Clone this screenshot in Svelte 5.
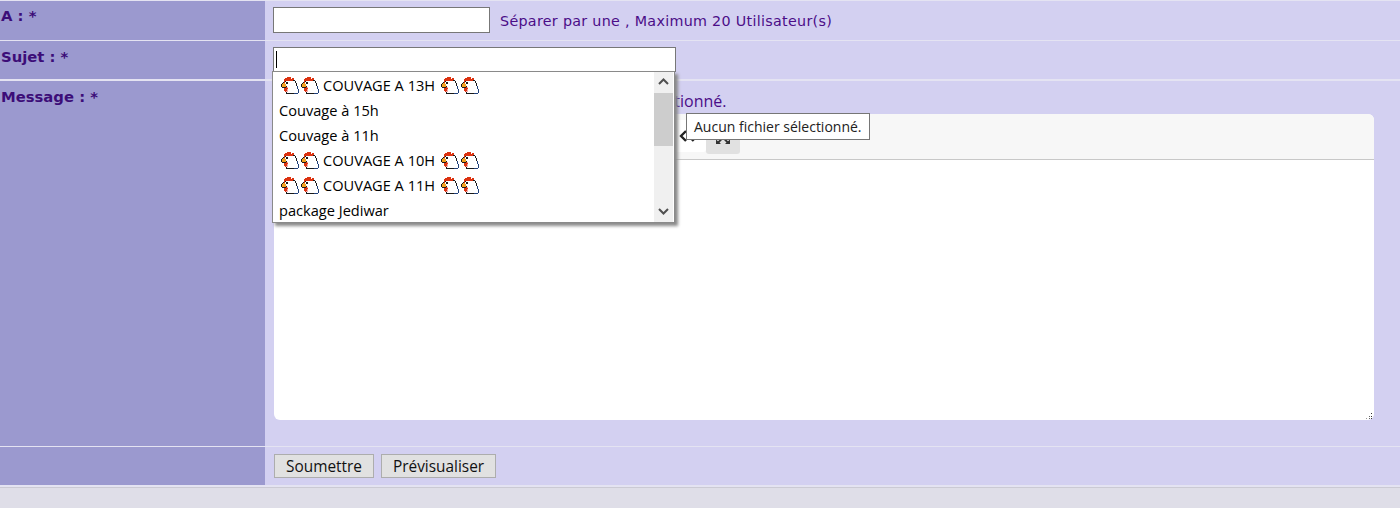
<script>
  const chicken = [
    "......RRR........",
    "....RRRRR.RR.....",
    "...RRRRRRRRR.....",
    "...RRRRRRRRKK....",
    "...RKWWWWWWWWK...",
    "..KRWKKWWWWWWK...",
    ".KOOWKKWWWWWWWK..",
    "KOOOOWWWWWWWWWK..",
    "KOOOOKWWWWWWWWWB.",
    ".KKKKRPWWWWWWWWB.",
    "...RRRRWWWWWWWWB.",
    "...RRRPWWWWWWWWWB",
    "...RRRPWWWWWWWWWB",
    "....RPPWWWWWWWWWB",
    ".....KWWWWWWWWWWB",
    ".....KKKKKKKBBBB."
  ];
  const colors = { K: "#1a1a1a", R: "#dc3210", O: "#f0a020", W: "#ffffff", P: "#f7a8a8", B: "#20407a" };
  const pixels = [];
  chicken.forEach((row, y) => {
    [...row].forEach((c, x) => {
      if (c !== ".") pixels.push({ x, y, fill: colors[c] });
    });
  });

  const suggestions = [
    { label: "COUVAGE A 13H", icons: true },
    { label: "Couvage à 15h" },
    { label: "Couvage à 11h" },
    { label: "COUVAGE A 10H", icons: true },
    { label: "COUVAGE A 11H", icons: true },
    { label: "package Jediwar" }
  ];
</script>

{#snippet hen()}
  <svg class="hen" width="18" height="17" viewBox="0 0 17 16" shape-rendering="crispEdges">
    {#each pixels as p}
      <rect x={p.x} y={p.y} width="1" height="1" fill={p.fill} />
    {/each}
  </svg>
{/snippet}

<div class="page">
  <div class="form">
    <div class="label row-a">A : *</div>
    <div class="field row-a">
      <input class="dest" type="text" />
      <span class="hint">Séparer par une , Maximum 20 Utilisateur(s)</span>
    </div>

    <div class="label row-b">Sujet : *</div>
    <div class="field row-b subject-cell">
      <div class="subject"><span class="caret"></span></div>
      <div class="dropdown">
        <ul>
          {#each suggestions as s}
            <li>
              {#if s.icons}
                <span class="hens">{@render hen()}{@render hen()}</span>
              {/if}
              <span>{s.label}</span>
              {#if s.icons}
                <span class="hens">{@render hen()}{@render hen()}</span>
              {/if}
            </li>
          {/each}
        </ul>
        <div class="scrollbar">
          <svg width="17" height="21" viewBox="0 0 17 21"><path d="M4 12 L8.5 7.5 L13 12" fill="none" stroke="#505050" stroke-width="2" /></svg>
          <div class="track"><div class="thumb"></div></div>
          <svg width="17" height="21" viewBox="0 0 17 21"><path d="M4 8 L8.5 12.5 L13 8" fill="none" stroke="#505050" stroke-width="2" /></svg>
        </div>
      </div>
    </div>

    <div class="label row-c">Message : *</div>
    <div class="field row-c message-cell">
      <div class="file-line">
        <button class="file-btn" type="button">Choisir un fichier</button>
        <span>Aucun fichier sélectionné.</span>
      </div>
      <div class="editor">
        <div class="toolbar">
          <div class="tool code">
            <svg width="20" height="16" viewBox="0 0 20 16"><path d="M7 3 L2 8 L7 13 M13 3 L18 8 L13 13" fill="none" stroke="#222" stroke-width="2.4" /></svg>
          </div>
          <div class="tool full">
            <svg width="18" height="16" viewBox="0 0 18 16"><path d="M2 3 H7 L5.5 4.5 L8 7 L6.5 8 L4 5.7 L2 7.5 Z M16 3 H11 L12.5 4.5 L10 7 L11.5 8 L14 5.7 L16 7.5 Z M2 15 H7 L5.5 13.5 L8 11 L6.5 10 L4 12.3 L2 10.5 Z M16 15 H11 L12.5 13.5 L10 11 L11.5 10 L14 12.3 L16 10.5 Z" fill="#333" /></svg>
          </div>
        </div>
        <div class="body"></div>
        <svg class="grip" width="7" height="7" viewBox="0 0 7 7" shape-rendering="crispEdges">
          <rect x="5" y="0" width="1" height="1" fill="#333" />
          <rect x="3" y="3" width="1" height="1" fill="#666" />
          <rect x="5" y="3" width="1" height="1" fill="#333" />
          <rect x="0" y="5" width="1" height="1" fill="#999" />
          <rect x="3" y="5" width="1" height="1" fill="#666" />
          <rect x="5" y="5" width="1" height="1" fill="#333" />
        </svg>
      </div>
      <div class="tooltip">Aucun fichier sélectionné.</div>
    </div>

    <div class="label row-d"></div>
    <div class="field row-d actions">
      <button type="button">Soumettre</button>
      <button type="button">Prévisualiser</button>
    </div>
  </div>
  <div class="footer"></div>
</div>

<style>
  :global(body) {
    margin: 0;
    background: #dfdee8;
  }
  .page {
    width: 1400px;
    height: 508px;
    overflow: hidden;
    font-family: "DejaVu Sans", sans-serif;
  }
  .form {
    display: grid;
    grid-template-columns: 265px 1fr;
    grid-template-rows: 39px 38px 366px 38px;
    row-gap: 1px;
    background: #e4e3f2;
    padding-top: 1px;
    padding-bottom: 2px;
    border-bottom: 1px solid #cbcad4;
  }
  .label {
    background: #9b99cf;
    color: #3c0d78;
    font-weight: bold;
    font-size: 14.8px;
    line-height: 17px;
    padding: 7px 0 0 1px;
  }
  .row-a.label {
    padding-top: 6px;
  }
  .row-c {
    margin-top: 1px;
  }
  .field {
    background: #d3d0f1;
    position: relative;
  }
  .row-a.field {
    display: flex;
    align-items: flex-start;
    padding: 6px 0 0 8px;
    gap: 10px;
  }
  .dest {
    box-sizing: border-box;
    width: 217px;
    height: 26px;
    border: 1px solid #777;
    background: #fff;
    padding: 0;
    margin: 0;
  }
  .hint {
    color: #4b0d88;
    font-size: 14.3px;
    letter-spacing: 0.3px;
    line-height: 28px;
  }
  .subject {
    box-sizing: border-box;
    width: 403px;
    height: 25px;
    margin: 6px 0 0 8px;
    border: 1px solid #777;
    background: #fff;
    padding: 3px 2px;
  }
  .caret {
    display: block;
    width: 1px;
    height: 17px;
    background: #000;
  }
  .dropdown {
    position: absolute;
    z-index: 3;
    left: 7px;
    top: 30px;
    width: 403px;
    height: 152px;
    box-sizing: border-box;
    border: 1px solid #8a8a8a;
    background: #fff;
    box-shadow: 3px 3px 3px #8a8a8a;
    display: flex;
    font-family: "Open Sans", sans-serif;
    font-size: 14.6px;
    color: #000;
  }
  .dropdown ul {
    flex: 1;
    list-style: none;
    margin: 0;
    padding: 1px 0 0 0;
    min-width: 0;
  }
  .dropdown li {
    height: 25px;
    line-height: 25px;
    padding-left: 6px;
    display: flex;
    align-items: center;
    gap: 4px;
  }
  .hens {
    display: inline-flex;
    gap: 2px;
    padding-left: 2px;
  }
  .hen {
    display: block;
  }
  .scrollbar {
    width: 19px;
    margin-right: 1px;
    background: #f0f0f0;
    display: flex;
    flex-direction: column;
    align-items: center;
  }
  .track {
    flex: 1;
    width: 100%;
  }
  .thumb {
    height: 53px;
    background: #cdcdcd;
  }
  .message-cell {
    padding-left: 9px;
  }
  .file-line {
    height: 33px;
    display: flex;
    align-items: center;
    gap: 6px;
    color: #4b0d88;
    font-family: "Open Sans", sans-serif;
    font-size: 16px;
    padding-top: 7px;
    box-sizing: border-box;
  }
  .file-btn {
    width: 255px;
    height: 22px;
    padding: 0;
    font: inherit;
    font-size: 13px;
  }
  .editor {
    position: relative;
    width: 1100px;
    height: 306px;
    border-radius: 6px;
    background: #fff;
    overflow: hidden;
    display: flex;
    flex-direction: column;
  }
  .toolbar {
    box-sizing: border-box;
    height: 46px;
    background: #f7f7f7;
    border-bottom: 1px solid #c8c8c8;
    display: flex;
    align-items: flex-start;
    padding: 6px 0 0 398px;
    flex-shrink: 0;
  }
  .tool {
    width: 34px;
    height: 34px;
    display: flex;
    align-items: center;
    justify-content: center;
    border-radius: 0 0 3px 3px;
  }
  .code {
    background: #fff;
    height: 32px;
  }
  .full {
    background: #e1e1e1;
  }
  .body {
    flex: 1;
  }
  .grip {
    position: absolute;
    right: 1px;
    bottom: 0;
  }
  .tooltip {
    position: absolute;
    z-index: 4;
    left: 421px;
    top: 32px;
    height: 27px;
    line-height: 25px;
    box-sizing: border-box;
    padding: 0 7px;
    background: #fff;
    border: 1px solid #767676;
    font-family: "Open Sans", sans-serif;
    font-size: 14px;
    color: #222;
    white-space: nowrap;
  }
  .actions {
    display: flex;
    gap: 7px;
    padding: 7px 0 0 9px;
    align-items: flex-start;
  }
  .actions button {
    height: 24px;
    box-sizing: border-box;
    background: #e1e1e1;
    border: 1px solid #adadad;
    border-radius: 0;
    font-family: "Open Sans", sans-serif;
    font-size: 15.4px;
    line-height: 20px;
    padding: 2px 11px 0;
    color: #111;
  }
  .footer {
    height: 21px;
    background: #dfdee8;
  }
</style>
